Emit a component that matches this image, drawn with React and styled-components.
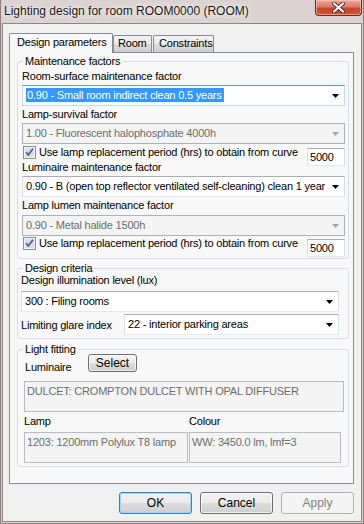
import React from 'react';
import styled, { createGlobalStyle, css } from 'styled-components';

const GlobalStyle = createGlobalStyle`
  html, body { margin: 0; padding: 0; background: #d7cdcd; }
  body { font-family: "Liberation Sans", Arial, sans-serif; font-size: 11px; letter-spacing: -0.2px; color: #000; }
  * { box-sizing: border-box; }
`;

const Window = styled.div`
  width: 364px;
  height: 524px;
  display: flex;
  flex-direction: column;
  padding: 0 2px 2px 2px;
  background: linear-gradient(90deg, #c9b9b8 0px, #dcd2d2 2px, #dcd2d2 362px, #c9b9b8 364px);
  box-shadow: inset 1px 0 0 #8d7f7f, inset -1px 0 0 #8d7f7f, inset 0 -1px 0 #8d7f7f;
`;

const TitleBar = styled.div`
  height: 23px;
  display: flex;
  align-items: flex-start;
  justify-content: space-between;
`;

const Title = styled.div`
  font-size: 12px;
  letter-spacing: 0;
  line-height: 14px;
  margin: 4px 0 0 2px;
  color: #151515;
  text-shadow: 0 0 6px rgba(255, 255, 255, 0.9), 0 0 2px rgba(255, 255, 255, 0.9);
  white-space: nowrap;
`;

const CloseButton = styled.div`
  width: 47px;
  height: 16px;
  display: flex;
  align-items: center;
  justify-content: center;
  border: 1px solid #6b2a20;
  border-top: none;
  border-radius: 0 0 4px 4px;
  background: linear-gradient(#e9a99b 0%, #dc7d69 45%, #c8452c 55%, #d0533a 100%);
  box-shadow: inset 0 0 0 1px rgba(255, 210, 200, 0.55);
`;

const Client = styled.div`
  flex: 1;
  display: flex;
  flex-direction: column;
  padding: 9px 7px 0 6px;
  background: #f0f0f0;
  border: 1px solid #8f8585;
`;

const TabStrip = styled.div`
  height: 19px;
  display: flex;
  align-items: flex-end;
  position: relative;
  z-index: 1;
`;

const Tab = styled.div`
  height: 17px;
  width: ${p => p.$w}px;
  margin-left: ${p => p.$ml || 0}px;
  padding-left: ${p => p.$pl}px;
  line-height: 15px;
  border: 1px solid #898c95;
  border-bottom: none;
  border-radius: 2px 2px 0 0;
  background: linear-gradient(#f3f3f3 0%, #ebebeb 50%, #dddddd 50%, #cfcfcf 100%);
  white-space: nowrap;
  ${p => p.$active && css`
    height: 20px;
    margin-bottom: -1px;
    line-height: 17px;
    background: #f8f8f8;
  `}
`;

const Pane = styled.div`
  height: 432px;
  border: 1px solid #898c95;
  background: #f8f8f8;
  padding: 1px 4px 0 7px;
  display: flex;
  flex-direction: column;
`;

const Group = styled.fieldset`
  margin: ${p => p.$mt || 0}px 0 0 0;
  padding: 0 0 ${p => p.$pb || 0}px 0;
  border: 1px solid #d5dfe5;
  border-radius: 3px;
  min-width: 0;
`;

const Legend = styled.legend`
  margin-left: 5px;
  padding: 0 2px;
  line-height: 14px;
  font-size: 11px;
`;

const GroupBody = styled.div`
  display: flex;
  flex-direction: column;
  padding: 0 ${p => p.$pr}px 0 ${p => p.$pl}px;
`;

const Label = styled.div`
  line-height: ${p => p.$lh || 16}px;
  height: ${p => p.$lh || 16}px;
  margin-top: ${p => p.$mt || 0}px;
  padding-left: ${p => p.$pl || 0}px;
  white-space: nowrap;
  ${p => p.$w && css`width: ${p.$w}px; flex: none;`}
`;

const ComboBox = styled.div`
  height: 21px;
  margin-top: ${p => (p.$mt === undefined ? 1 : p.$mt)}px;
  display: flex;
  align-items: center;
  background: #fff;
  border: 1px solid #abadb3;
  border-color: #abadb3 #dbdfe6 #e3e9ef #dbdfe6;
  padding-left: 3px;
  ${p => p.$flex && css`flex: 1;`}
  ${p => p.$focused && css`
    border-color: #569de5 #c5daed #c5daed #c5daed;
  `}
  ${p => p.$disabled && css`
    background: #f4f4f4;
    border-color: #adb2b5;
    color: #6d6d6d;
  `}
`;

const ComboText = styled.div`
  flex: 1;
  min-width: 0;
  overflow: hidden;
  white-space: nowrap;
  line-height: 15px;
`;

const Selected = styled.span`
  display: inline-block;
  background: #3399ff;
  color: #fff;
  padding: 0 1px;
  line-height: 14px;
  border-right: 1px solid #e07a2a;
`;

const Arrow = styled.svg`
  flex: none;
  margin: 0 5px 0 6px;
  fill: ${p => (p.$disabled ? '#a3a3a3' : '#000')};
`;

const CheckRow = styled.div`
  height: 13px;
  margin-top: ${p => p.$mt}px;
  display: flex;
  align-items: flex-start;
  padding-left: 1px;
`;

const CheckLabel = styled.div`
  line-height: 13px;
  margin-left: 3px;
  flex: 1;
  white-space: nowrap;
`;

const NumBox = styled.div`
  width: 38px;
  height: 18px;
  margin-top: 2px;
  flex: none;
  background: #fff;
  border: 1px solid;
  border-color: #abadb3 #dbdfe6 #e3e9ef #dbdfe6;
  padding: 2px 0 0 2px;
  line-height: 13px;
`;

const Row = styled.div`
  display: flex;
  align-items: ${p => p.$align || 'center'};
  margin-top: ${p => p.$mt || 0}px;
  gap: ${p => p.$gap || 0}px;
`;

const TextField = styled.div`
  height: 31px;
  width: ${p => (p.$w ? `${p.$w}px` : 'auto')};
  margin-top: ${p => p.$mt || 0}px;
  background: #f4f4f4;
  border: 1px solid #b9bcc0;
  color: #6d6d6d;
  padding: 2px 0 0 2px;
  line-height: 14px;
  white-space: nowrap;
  overflow: hidden;
`;

const ButtonRow = styled.div`
  display: flex;
  justify-content: flex-end;
  gap: 8px;
  margin-top: 8px;
`;

const Button = styled.div`
  width: ${p => p.$w || 73}px;
  height: ${p => p.$h || 22}px;
  display: flex;
  align-items: center;
  justify-content: center;
  font-size: 12px;
  letter-spacing: 0;
  border: 1px solid #707070;
  border-radius: 3px;
  background: linear-gradient(#f2f2f2 0%, #ebebeb 50%, #dddddd 50%, #cfcfcf 100%);
  box-shadow: inset 0 0 0 1px rgba(255, 255, 255, 0.7);
  ${p => p.$variant === 'default' && css`
    border-color: #3c7fb1;
    box-shadow: inset 0 0 0 1px #9ed5f5;
  `}
  ${p => p.$variant === 'disabled' && css`
    border-color: #adb2b5;
    background: #f4f4f4;
    color: #838383;
    box-shadow: none;
  `}
`;

const CheckBox = () => (
  <svg width="13" height="13" viewBox="0 0 13 13" style={{ flex: 'none' }}>
    <rect x="0.5" y="0.5" width="12" height="12" fill="#f4f4f4" stroke="#8e8f8f" />
    <rect x="2" y="2" width="9" height="9" fill="#d9dde3" />
    <path d="M3 6.2 L5.3 8.8 L10 2.8" fill="none" stroke="#4a5f97" strokeWidth="1.7" />
  </svg>
);

const DropArrow = ({ disabled }) => (
  <Arrow $disabled={disabled} width="7" height="4" viewBox="0 0 7 4">
    <path d="M0 0H7L3.5 4Z" />
  </Arrow>
);

const Combo = ({ children, disabled, focused, mt, flex }) => (
  <ComboBox $disabled={disabled} $focused={focused} $mt={mt} $flex={flex}>
    <ComboText>{children}</ComboText>
    <DropArrow disabled={disabled} />
  </ComboBox>
);

export default function App() {
  return (
    <>
      <GlobalStyle />
      <Window>
        <TitleBar>
          <Title>Lighting design for room ROOM0000 (ROOM)</Title>
          <CloseButton>
            <svg width="13" height="11" viewBox="0 0 13 11">
              <path d="M2 1.5 L11 9.5 M11 1.5 L2 9.5" stroke="#5a2a22" strokeWidth="4" strokeLinecap="round" />
              <path d="M2 1.5 L11 9.5 M11 1.5 L2 9.5" stroke="#fff" strokeWidth="2.2" strokeLinecap="round" />
            </svg>
          </CloseButton>
        </TitleBar>
        <Client>
          <TabStrip>
            <Tab $active $w={104} $pl={7}>Design parameters</Tab>
            <Tab $w={39} $pl={4}>Room</Tab>
            <Tab $w={61} $ml={1} $pl={5}>Constraints</Tab>
          </TabStrip>
          <Pane>
            <Group $pb={8}>
              <Legend>Maintenance factors</Legend>
              <GroupBody $pl={4} $pr={3}>
                <Label>Room-surface maintenance factor</Label>
                <Combo focused>
                  <Selected>0.90 - Small room indirect clean 0.5 years</Selected>
                </Combo>
                <Label>Lamp-survival factor</Label>
                <Combo disabled>1.00 - Fluorescent halophosphate 4000h</Combo>
                <CheckRow $mt={2}>
                  <CheckBox />
                  <CheckLabel>Use lamp replacement period (hrs) to obtain from curve</CheckLabel>
                  <NumBox>5000</NumBox>
                </CheckRow>
                <Label>Luminaire maintenance factor</Label>
                <Combo>0.90 - B (open top reflector ventilated self-cleaning) clean 1 year</Combo>
                <Label>Lamp lumen maintenance factor</Label>
                <Combo disabled mt={2}>0.90 - Metal halide 1500h</Combo>
                <CheckRow $mt={1}>
                  <CheckBox />
                  <CheckLabel>Use lamp replacement period (hrs) to obtain from curve</CheckLabel>
                  <NumBox>5000</NumBox>
                </CheckRow>
              </GroupBody>
            </Group>
            <Group $mt={2} $pb={3}>
              <Legend>Design criteria</Legend>
              <GroupBody $pl={3} $pr={9}>
                <Label $mt={-3}>Design illumination level (lux)</Label>
                <Combo mt={3}>300 : Filing rooms</Combo>
                <Row $mt={2}>
                  <Label $w={103}>Limiting glare index</Label>
                  <Combo mt={0} flex>22 - interior parking areas</Combo>
                </Row>
              </GroupBody>
            </Group>
            <Group $mt={3} $pb={3}>
              <Legend>Light fitting</Legend>
              <GroupBody $pl={6} $pr={4}>
                <Row $mt={-2} $align="flex-start">
                  <Label $w={64} $mt={6} $lh={14} $pl={1}>Luminaire</Label>
                  <Button $w={49} $h={18}>Select</Button>
                </Row>
                <TextField $mt={7}>DULCET: CROMPTON DULCET WITH OPAL DIFFUSER</TextField>
                <Row $mt={2}>
                  <Label $w={165} $lh={14}>Lamp</Label>
                  <Label $lh={14}>Colour</Label>
                </Row>
                <Row $mt={4} $gap={1}>
                  <TextField $w={164}>1203: 1200mm Polylux T8 lamp</TextField>
                  <TextField $w={152}>WW: 3450.0 lm, lmf=3</TextField>
                </Row>
              </GroupBody>
            </Group>
          </Pane>
          <ButtonRow>
            <Button $variant="default">OK</Button>
            <Button>Cancel</Button>
            <Button $variant="disabled">Apply</Button>
          </ButtonRow>
        </Client>
      </Window>
    </>
  );
}
